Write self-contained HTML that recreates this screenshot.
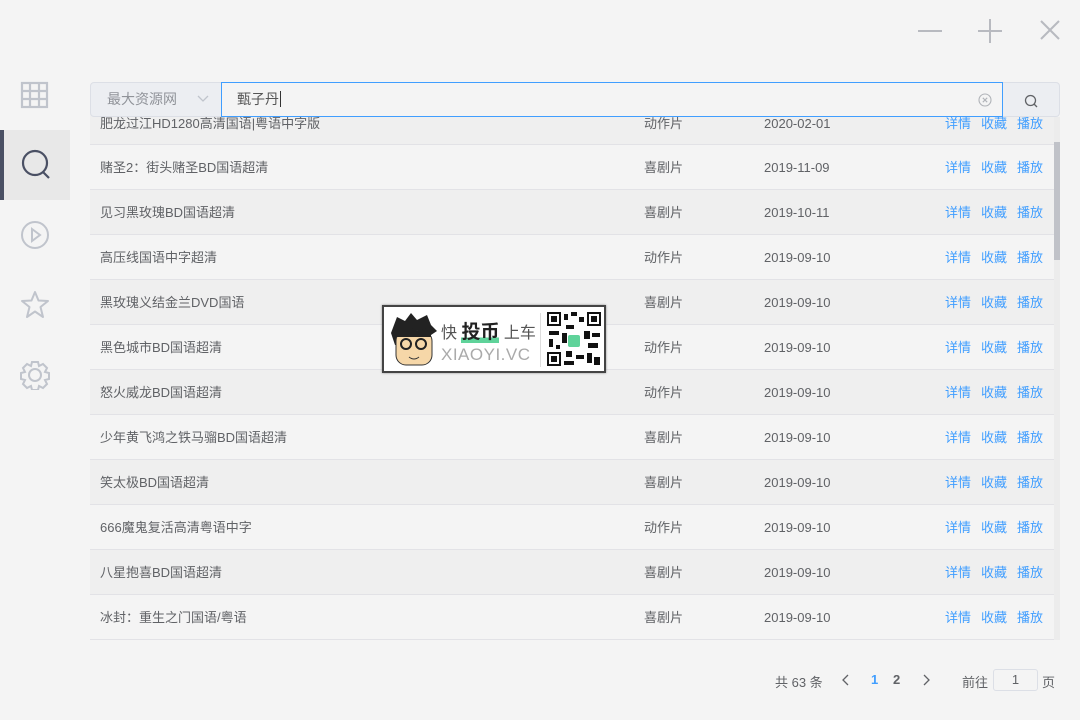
<!DOCTYPE html>
<html><head><meta charset="utf-8"><style>
*{margin:0;padding:0;box-sizing:border-box}
body{width:1080px;height:720px;background:#f4f4f4;font-family:"Liberation Sans","Noto Sans CJK SC",sans-serif;position:relative;overflow:hidden;color:#606266;font-size:13px}
.abs{position:absolute}
.row{position:absolute;left:90px;width:964px;height:45px;border-bottom:1px solid #e2e2e6}
.row span{position:absolute;top:15px;line-height:16px}
.dk{background:#efefef}
.a{color:#409eff}
</style></head><body>
<svg class="abs" style="left:915px;top:18px" width="150" height="26" stroke="#b8bac0" stroke-width="2" fill="none">
<line x1="3" y1="13" x2="27" y2="13"/>
<line x1="63" y1="13" x2="87" y2="13"/><line x1="75" y1="1" x2="75" y2="25"/>
<line x1="126" y1="3" x2="144" y2="21"/><line x1="144" y1="3" x2="126" y2="21"/>
</svg>
<div class="abs" style="left:0;top:130px;width:70px;height:70px;background:#e8e8e8"></div>
<div class="abs" style="left:0;top:130px;width:4px;height:70px;background:#4a5064"></div>
<svg class="abs" style="left:20px;top:80px" width="30" height="30" fill="none" stroke="#c0c4cc" stroke-width="2.2">
<rect x="2" y="3" width="25" height="24"/><line x1="10" y1="3" x2="10" y2="27"/><line x1="19" y1="3" x2="19" y2="27"/><line x1="2" y1="11" x2="27" y2="11"/><line x1="2" y1="19" x2="27" y2="19"/>
</svg>
<svg class="abs" style="left:20px;top:148px" width="32" height="34" fill="none" stroke="#4a5064" stroke-width="2.2">
<circle cx="15" cy="15" r="12"/><line x1="23" y1="24" x2="29" y2="30"/>
</svg>
<svg class="abs" style="left:20px;top:220px" width="30" height="30" fill="none" stroke="#c0c4cc" stroke-width="2">
<circle cx="15" cy="15" r="13"/><path d="M12 9 L20 15 L12 21 Z"/>
</svg>
<svg class="abs" style="left:20px;top:290px" width="30" height="30" fill="none" stroke="#c0c4cc" stroke-width="2" stroke-linejoin="round">
<path d="M15 2 L18.5 10.5 L28 11 L20.5 17 L23 27 L15 21.5 L7 27 L9.5 17 L2 11 L11.5 10.5 Z"/>
</svg>
<svg class="abs" style="left:20px;top:360px" width="30" height="30" fill="none" stroke="#c0c4cc" stroke-width="2">
<circle cx="15" cy="15" r="6"/><path d="M12 2h6l1 4 4-2 4 4-2 4 4 1v6l-4 1 2 4-4 4-4-2-1 4h-6l-1-4-4 2-4-4 2-4-4-1v-6l4-1-2-4 4-4 4 2z"/>
</svg>
<div class="row dk" style="top:100px"><span style="left:10px;top:16px">肥龙过江HD1280高清国语|粤语中字版</span><span style="left:554px;top:16px">动作片</span><span style="left:674px;top:16px">2020-02-01</span><span class="a" style="left:855px;top:16px">详情</span><span class="a" style="left:891px;top:16px">收藏</span><span class="a" style="left:927px;top:16px">播放</span></div>
<div class="row" style="top:145px"><span style="left:10px">赌圣2：街头赌圣BD国语超清</span><span style="left:554px">喜剧片</span><span style="left:674px">2019-11-09</span><span class="a" style="left:855px">详情</span><span class="a" style="left:891px">收藏</span><span class="a" style="left:927px">播放</span></div>
<div class="row dk" style="top:190px"><span style="left:10px">见习黑玫瑰BD国语超清</span><span style="left:554px">喜剧片</span><span style="left:674px">2019-10-11</span><span class="a" style="left:855px">详情</span><span class="a" style="left:891px">收藏</span><span class="a" style="left:927px">播放</span></div>
<div class="row" style="top:235px"><span style="left:10px">高压线国语中字超清</span><span style="left:554px">动作片</span><span style="left:674px">2019-09-10</span><span class="a" style="left:855px">详情</span><span class="a" style="left:891px">收藏</span><span class="a" style="left:927px">播放</span></div>
<div class="row dk" style="top:280px"><span style="left:10px">黑玫瑰义结金兰DVD国语</span><span style="left:554px">喜剧片</span><span style="left:674px">2019-09-10</span><span class="a" style="left:855px">详情</span><span class="a" style="left:891px">收藏</span><span class="a" style="left:927px">播放</span></div>
<div class="row" style="top:325px"><span style="left:10px">黑色城市BD国语超清</span><span style="left:554px">动作片</span><span style="left:674px">2019-09-10</span><span class="a" style="left:855px">详情</span><span class="a" style="left:891px">收藏</span><span class="a" style="left:927px">播放</span></div>
<div class="row dk" style="top:370px"><span style="left:10px">怒火威龙BD国语超清</span><span style="left:554px">动作片</span><span style="left:674px">2019-09-10</span><span class="a" style="left:855px">详情</span><span class="a" style="left:891px">收藏</span><span class="a" style="left:927px">播放</span></div>
<div class="row" style="top:415px"><span style="left:10px">少年黄飞鸿之铁马骝BD国语超清</span><span style="left:554px">喜剧片</span><span style="left:674px">2019-09-10</span><span class="a" style="left:855px">详情</span><span class="a" style="left:891px">收藏</span><span class="a" style="left:927px">播放</span></div>
<div class="row dk" style="top:460px"><span style="left:10px">笑太极BD国语超清</span><span style="left:554px">喜剧片</span><span style="left:674px">2019-09-10</span><span class="a" style="left:855px">详情</span><span class="a" style="left:891px">收藏</span><span class="a" style="left:927px">播放</span></div>
<div class="row" style="top:505px"><span style="left:10px">666魔鬼复活高清粤语中字</span><span style="left:554px">动作片</span><span style="left:674px">2019-09-10</span><span class="a" style="left:855px">详情</span><span class="a" style="left:891px">收藏</span><span class="a" style="left:927px">播放</span></div>
<div class="row dk" style="top:550px"><span style="left:10px">八星抱喜BD国语超清</span><span style="left:554px">喜剧片</span><span style="left:674px">2019-09-10</span><span class="a" style="left:855px">详情</span><span class="a" style="left:891px">收藏</span><span class="a" style="left:927px">播放</span></div>
<div class="row" style="top:595px;height:45px"><span style="left:10px">冰封：重生之门国语/粤语</span><span style="left:554px">喜剧片</span><span style="left:674px">2019-09-10</span><span class="a" style="left:855px">详情</span><span class="a" style="left:891px">收藏</span><span class="a" style="left:927px">播放</span></div>
<div class="abs" style="left:1054px;top:117px;width:6px;height:523px;background:#ececec"></div>
<div class="abs" style="left:1054px;top:142px;width:6px;height:118px;background:#c0c2c8"></div>
<div class="abs" style="left:90px;top:82px;width:132px;height:35px;background:#eceef2;border:1px solid #dcdfe6;border-radius:4px 0 0 4px;color:#909399;font-size:14px;line-height:33px;padding-left:16px">最大资源网
<svg class="abs" style="left:106px;top:12px" width="12" height="8" fill="none" stroke="#c0c4cc" stroke-width="1.3"><path d="M1 1 L6 6 L11 1"/></svg></div>
<div class="abs" style="left:221px;top:82px;width:782px;height:35px;background:#f4f4f4;border:1px solid #409eff;font-size:14px;line-height:33px;padding-left:15px;color:#555">甄子丹<span style="border-left:1px solid #333;margin-left:1px"></span>
<svg class="abs" style="left:756px;top:10px" width="14" height="14" fill="none" stroke="#b0b3b8" stroke-width="1.1"><circle cx="7" cy="7" r="6"/><path d="M4.8 4.8 L9.2 9.2 M9.2 4.8 L4.8 9.2"/></svg></div>
<div class="abs" style="left:1003px;top:82px;width:57px;height:35px;background:#eceef2;border:1px solid #dcdfe6;border-left:none;border-radius:0 4px 4px 0">
<svg class="abs" style="left:21px;top:11px" width="15" height="15" fill="none" stroke="#606266" stroke-width="1.3"><circle cx="6.5" cy="6.5" r="5"/><line x1="10" y1="10" x2="13" y2="13"/></svg></div>
<div class="abs" style="left:382px;top:305px;width:224px;height:68px;background:#fff;border:2px solid #444;box-shadow:0 0 2px #888">
<svg class="abs" style="left:3px;top:4px" width="52" height="58"><path d="M4 22 L10 6 L18 10 L24 2 L30 9 L40 4 L44 14 L50 20 L44 24 L44 34 L8 34 Z" fill="#222"/><rect x="9" y="20" width="36" height="34" rx="10" fill="#f6d7a8" stroke="#333"/><path d="M9 22 L20 14 L30 20 L44 16 L44 26 L9 26Z" fill="#222"/><circle cx="19" cy="33" r="5" fill="none" stroke="#222" stroke-width="2"/><circle cx="34" cy="33" r="5" fill="none" stroke="#222" stroke-width="2"/><path d="M22 46 Q27 50 32 46" stroke="#333" fill="none"/></svg>
<div class="abs" style="left:57px;top:10px;font-size:16px;color:#555;white-space:nowrap">快 <b style="color:#222;font-size:19px;background:linear-gradient(transparent 75%,#5fd39a 75%)">投币</b> 上车</div>
<div class="abs" style="left:57px;top:38px;font-size:17px;color:#aaa;letter-spacing:0.5px">XIAOYI.VC</div>
<div class="abs" style="left:156px;top:6px;width:1px;height:54px;background:#ddd"></div>
<svg class="abs" style="left:162px;top:4px" width="56" height="56"><rect width="56" height="56" fill="#fff"/><g fill="#111"><rect x="1" y="1" width="14" height="14"/><rect x="41" y="1" width="14" height="14"/><rect x="1" y="41" width="14" height="14"/><rect x="18" y="3" width="4" height="6"/><rect x="25" y="1" width="6" height="4"/><rect x="33" y="6" width="5" height="5"/><rect x="20" y="14" width="8" height="4"/><rect x="3" y="20" width="10" height="4"/><rect x="16" y="22" width="5" height="10"/><rect x="38" y="20" width="6" height="8"/><rect x="46" y="22" width="8" height="4"/><rect x="3" y="28" width="4" height="8"/><rect x="42" y="32" width="10" height="5"/><rect x="20" y="40" width="6" height="6"/><rect x="30" y="44" width="8" height="4"/><rect x="41" y="42" width="5" height="10"/><rect x="48" y="46" width="6" height="8"/><rect x="18" y="50" width="10" height="4"/><rect x="10" y="34" width="4" height="4"/></g><g fill="#fff"><rect x="3" y="3" width="10" height="10"/><rect x="43" y="3" width="10" height="10"/><rect x="3" y="43" width="10" height="10"/></g><g fill="#111"><rect x="5" y="5" width="6" height="6"/><rect x="45" y="5" width="6" height="6"/><rect x="5" y="45" width="6" height="6"/></g><rect x="22" y="24" width="12" height="12" rx="2" fill="#5fd39a"/></svg>
</div>
<div class="abs" style="left:775px;top:672px;color:#606266;font-size:13px">共 63 条</div>
<svg class="abs" style="left:841px;top:674px" width="10" height="12" fill="none" stroke="#606266" stroke-width="1.3"><path d="M7 1 L2 6 L7 11"/></svg>
<div class="abs" style="left:871px;top:672px;color:#409eff;font-weight:bold">1</div>
<div class="abs" style="left:893px;top:672px;color:#606266;font-weight:bold">2</div>
<svg class="abs" style="left:921px;top:674px" width="10" height="12" fill="none" stroke="#606266" stroke-width="1.3"><path d="M3 1 L8 6 L3 11"/></svg>
<div class="abs" style="left:962px;top:672px">前往</div>
<div class="abs" style="left:993px;top:669px;width:45px;height:22px;border:1px solid #dcdfe6;border-radius:3px;text-align:center;line-height:20px">1</div>
<div class="abs" style="left:1042px;top:672px">页</div>
</body></html>
